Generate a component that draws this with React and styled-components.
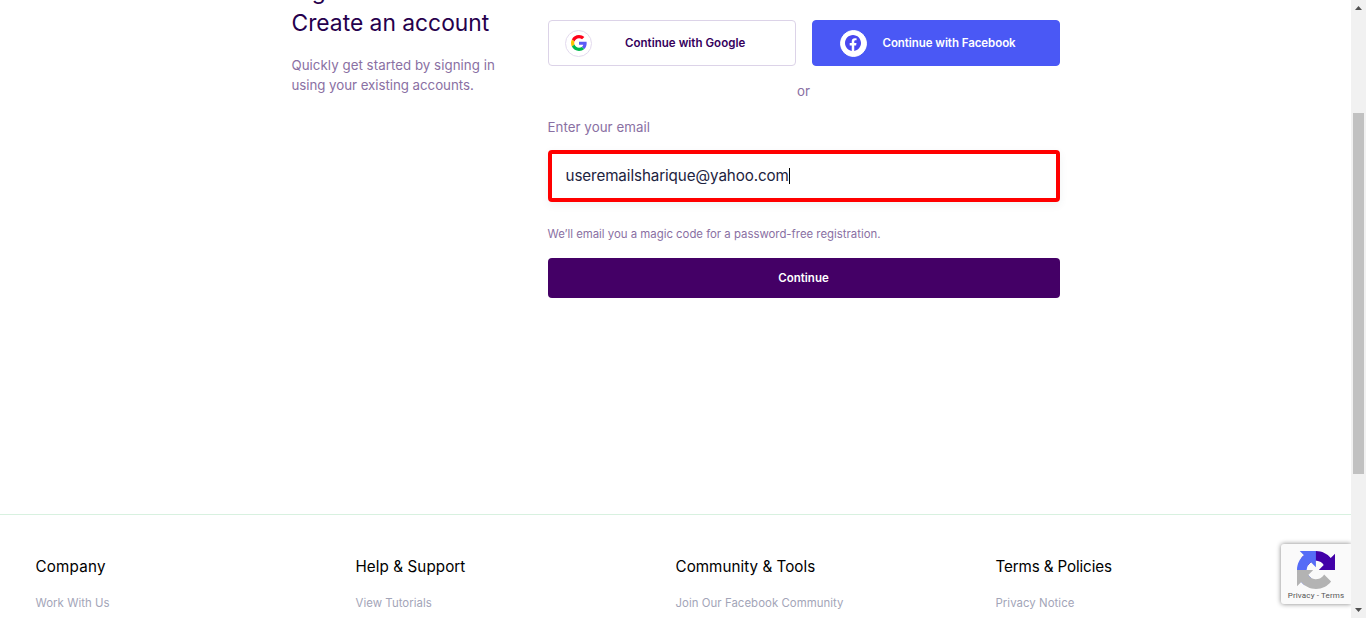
import React from "react";
import styled, { createGlobalStyle } from "styled-components";

const GlobalStyle = createGlobalStyle`
  *, *::before, *::after { box-sizing: border-box; }
  body {
    margin: 0;
    background: #fff;
    overflow: hidden;
    font-family: Inter, "Liberation Sans", sans-serif;
  }
  h1, h2, p, ul { margin: 0; padding: 0; font-weight: 400; }
`;

const Window = styled.div`
  display: flex;
  height: 618px;
  overflow: hidden;
`;

const Page = styled.div`
  position: relative;
  flex: 1;
  display: flex;
  flex-direction: column;
  overflow: hidden;
`;

const Signup = styled.main`
  display: flex;
  width: 768px;
  height: 514px;
  flex: none;
  margin: 0 auto;
`;

const Intro = styled.section`
  width: 256px;
  margin-top: -25px;
`;

const Title = styled.h1`
  font-size: 22.8px;
  line-height: 32px;
  color: #26004d;
`;

const Lead = styled.p`
  margin-top: 16px;
  font-size: 13.3px;
  line-height: 20px;
  color: #8a70a3;
`;

const LeadLine = styled.span`
  display: block;
  letter-spacing: ${(p) => p.$tracking};
`;

const Form = styled.section`
  width: 512px;
  padding-top: 20px;
  display: flex;
  flex-direction: column;
`;

const Providers = styled.div`
  display: grid;
  grid-template-columns: 1fr 1fr;
  gap: 16px;
`;

const ProviderButton = styled.button`
  height: 46px;
  display: flex;
  align-items: center;
  gap: ${(p) => p.$gap};
  padding: 0 0 0 ${(p) => p.$inset};
  border: 1px solid ${(p) => p.$border};
  border-radius: 4px;
  background: ${(p) => p.$bg};
  color: ${(p) => p.$color};
  font: 600 11.5px Inter, sans-serif;
  letter-spacing: ${(p) => p.$tracking};
  white-space: nowrap;
`;

const Badge = styled.span`
  display: grid;
  place-items: center;
  width: 27px;
  height: 27px;
  flex: none;
  border: 1px solid ${(p) => p.$ring};
  border-radius: 50%;
  background: #fff;
`;

const Divider = styled.p`
  margin-top: 15px;
  text-align: center;
  font-size: 13.3px;
  line-height: 20px;
  color: #8a70a3;
`;

const Label = styled.label`
  margin-top: 16px;
  font-size: 13.3px;
  line-height: 20px;
  letter-spacing: 0.05px;
  color: #8a70a3;
`;

const EmailField = styled.div`
  display: flex;
  align-items: center;
  height: 52px;
  margin-top: 13px;
  padding: 0 14px 1px;
  border: 4px solid #ff0000;
  border-radius: 4px;
  box-shadow: 0 3px 8px rgba(40, 80, 100, 0.07);
  font-size: 15.2px;
  letter-spacing: -0.1px;
  color: #1d2340;
`;

const Caret = styled.span`
  width: 1px;
  height: 16px;
  background: #000;
`;

const Hint = styled.p`
  margin-top: 24px;
  font-size: 11.4px;
  line-height: 16px;
  letter-spacing: -0.01px;
  color: #8a70a3;
`;

const SubmitButton = styled.button`
  height: 40px;
  margin-top: 16px;
  border: 0;
  border-radius: 4px;
  background: #440066;
  color: #fff;
  font: 600 11.5px Inter, sans-serif;
`;

const Footer = styled.footer`
  flex: none;
  border-top: 1px solid #d8f1e0;
`;

const FooterGrid = styled.div`
  display: grid;
  grid-template-columns: repeat(4, 1fr);
  width: 1280px;
  margin: 0 auto;
  padding-top: 40px;
`;

const FooterTitle = styled.h2`
  font-size: 15.2px;
  line-height: 24px;
  letter-spacing: ${(p) => p.$tracking};
  color: #000;
`;

const FooterLink = styled.p`
  margin-top: 16px;
  font-size: 11.4px;
  line-height: 16px;
  letter-spacing: 0.05px;
  color: #a3a5b8;
`;

const Recaptcha = styled.aside`
  position: absolute;
  right: 0;
  bottom: 14px;
  width: 70px;
  height: 60px;
  padding-top: 7px;
  display: flex;
  flex-direction: column;
  align-items: center;
  gap: 2px;
  border-radius: 3px 0 0 3px;
  background: #fafafa;
  box-shadow: 0 0 5px #808080;
  font: 8px/10px Roboto, sans-serif;
  letter-spacing: 0.15px;
  color: #555;
`;

const Scrollbar = styled.div`
  width: 15px;
  flex: none;
  display: flex;
  flex-direction: column;
  align-items: center;
  justify-content: space-between;
  padding: 6px 0 6px;
  background: #f1f1f1;
`;

const Thumb = styled.div`
  width: 11px;
  height: 361px;
  margin: 103px 0 auto 0;
  background: #c1c1c1;
`;

const GoogleMark = () => (
  <svg width="16" height="16" viewBox="0 0 48 48">
    <path fill="#ff0019" d="M24 9.5c3.54 0 6.71 1.22 9.21 3.6l6.85-6.85C35.9 2.38 30.47 0 24 0 14.62 0 6.51 5.38 2.56 13.22l7.98 6.19C12.43 13.72 17.74 9.5 24 9.5z" />
    <path fill="#5b5cf6" d="M46.98 24.55c0-1.57-.15-3.09-.38-4.55H24v9.02h12.94c-.58 2.96-2.26 5.48-4.78 7.18l7.73 6c4.51-4.18 7.09-10.36 7.09-17.65z" />
    <path fill="#ffc400" d="M10.53 28.59c-.48-1.45-.76-2.99-.76-4.59s.27-3.14.76-4.59l-7.98-6.19C.92 16.46 0 20.12 0 24c0 3.88.92 7.54 2.56 10.78l7.97-6.19z" />
    <path fill="#00b84f" d="M24 48c6.48 0 11.93-2.13 15.89-5.81l-7.73-6c-2.15 1.45-4.92 2.3-8.16 2.3-6.26 0-11.57-4.22-13.47-9.91l-7.98 6.19C6.51 42.62 14.62 48 24 48z" />
  </svg>
);

const FacebookMark = () => (
  <svg width="16" height="16" viewBox="0 0 24 24">
    <path fill="#4a48f0" d="M24 12.073C24 5.405 18.627 0 12 0S0 5.405 0 12.073c0 6.026 4.388 11.02 10.125 11.927v-8.437H7.078v-3.49h3.047V9.413c0-3.026 1.792-4.697 4.533-4.697 1.312 0 2.686.236 2.686.236v2.971H15.83c-1.491 0-1.956.93-1.956 1.886v2.264h3.328l-.532 3.49h-2.796V24C19.612 23.093 24 18.099 24 12.073z" />
  </svg>
);

const RecaptchaMark = () => (
  <svg width="38" height="38" viewBox="0 0 64 64">
    <path fill="#4200a8" d="M64 31.955l-.033-1.37V4.687l-7.16 7.16C50.948 4.674 42.033.093 32.05.093c-10.4 0-19.622 4.96-25.458 12.64l11.736 11.86a15.55 15.55 0 0 1 4.754-5.334c2.05-1.6 4.952-2.906 8.968-2.906.485 0 .86.057 1.135.163 4.976.393 9.288 3.14 11.828 7.124l-8.307 8.307L64 31.953" />
    <path fill="#566cf6" d="M31.862.094l-1.37.033H4.594l7.16 7.16C4.58 13.147 0 22.06 0 32.046c0 10.4 4.96 19.622 12.64 25.458L24.5 45.768a15.55 15.55 0 0 1-5.334-4.754c-1.6-2.05-2.906-4.952-2.906-8.968 0-.485.057-.86.163-1.135.393-4.976 3.14-9.288 7.124-11.828l8.307 8.307L31.86.095" />
    <path fill="#b3b3b3" d="M.001 32.045l.033 1.37v25.898l7.16-7.16c5.86 7.173 14.774 11.754 24.76 11.754 10.4 0 19.622-4.96 25.458-12.64l-11.736-11.86a15.55 15.55 0 0 1-4.754 5.334c-2.05 1.6-4.952 2.906-8.968 2.906-.485 0-.86-.057-1.135-.163-4.976-.393-9.288-3.14-11.828-7.124l8.307-8.307c-10.522.04-22.4.066-27.295-.005" />
  </svg>
);

const Arrow = ({ down }) => (
  <svg width="7" height="4" viewBox="0 0 7 4">
    <path fill="#505050" d={down ? "M0 0h7L3.5 4z" : "M0 4h7L3.5 0z"} />
  </svg>
);

const columns = [
  { title: "Company", link: "Work With Us", tracking: "0.2px" },
  { title: "Help & Support", link: "View Tutorials", tracking: "0.08px" },
  { title: "Community & Tools", link: "Join Our Facebook Community", tracking: "0.04px" },
  { title: "Terms & Policies", link: "Privacy Notice", tracking: "-0.13px" },
];

export default function App() {
  return (
    <Window>
      <GlobalStyle />
      <Page>
        <Signup>
          <Intro>
            <Title>
              Sign in
              <br />
              Create an account
            </Title>
            <Lead>
              <LeadLine $tracking="0.04px">Quickly get started by signing in</LeadLine>
              <LeadLine $tracking="-0.04px">using your existing accounts.</LeadLine>
            </Lead>
          </Intro>
          <Form>
            <Providers>
              <ProviderButton $bg="#fff" $color="#35005c" $border="#dcd3e8" $inset="16.5px" $gap="33px" $tracking="0.03px">
                <Badge $ring="#e3daee"><GoogleMark /></Badge>
                Continue with Google
              </ProviderButton>
              <ProviderButton $bg="#4a58f5" $color="#fff" $border="#4a58f5" $inset="27px" $gap="16px" $tracking="-0.06px">
                <Badge $ring="#fff"><FacebookMark /></Badge>
                Continue with Facebook
              </ProviderButton>
            </Providers>
            <Divider>or</Divider>
            <Label>Enter your email</Label>
            <EmailField>
              useremailsharique@yahoo.com
              <Caret />
            </EmailField>
            <Hint>We’ll email you a magic code for a password-free registration.</Hint>
            <SubmitButton>Continue</SubmitButton>
          </Form>
        </Signup>
        <Footer>
          <FooterGrid>
            {columns.map((c) => (
              <div key={c.title}>
                <FooterTitle $tracking={c.tracking}>{c.title}</FooterTitle>
                <FooterLink>{c.link}</FooterLink>
              </div>
            ))}
          </FooterGrid>
        </Footer>
        <Recaptcha>
          <RecaptchaMark />
          <span>Privacy - Terms</span>
        </Recaptcha>
      </Page>
      <Scrollbar>
        <Arrow />
        <Thumb />
        <Arrow down />
      </Scrollbar>
    </Window>
  );
}
